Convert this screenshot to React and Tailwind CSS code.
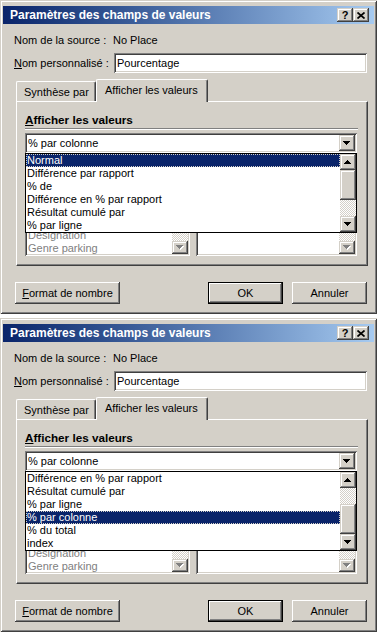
import React from "react";

const FONT = "font-['Liberation_Sans',Arial,sans-serif]";
const FRAME = "shadow-[inset_1px_1px_0_#d4d0c8,inset_-1px_-1px_0_#404040,inset_2px_2px_0_#ffffff,inset_-2px_-2px_0_#808080]";
const RAISED = "shadow-[inset_-1px_-1px_0_#404040,inset_1px_1px_0_#ffffff,inset_-2px_-2px_0_#808080,inset_2px_2px_0_#d4d0c8]";
const SCROLL_BTN = "shadow-[inset_-1px_-1px_0_#404040,inset_1px_1px_0_#d4d0c8,inset_-2px_-2px_0_#808080,inset_2px_2px_0_#ffffff]";
const SUNKEN = "shadow-[inset_1px_1px_0_#808080,inset_-1px_-1px_0_#ffffff,inset_2px_2px_0_#404040,inset_-2px_-2px_0_#d4d0c8]";
const DITHER = "bg-[image:repeating-conic-gradient(#ffffff_0_25%,#d4d0c8_0_50%)] bg-[length:2px_2px]";

const Arrow = ({ up, disabled }) => {
  const d = up
    ? "M3 0h1v1H3zM2 1h3v1H2zM1 2h5v1H1zM0 3h7v1H0z"
    : "M0 0h7v1H0zM1 1h5v1H1zM2 2h3v1H2zM3 3h1v1H3z";
  return (
    <svg width="8" height="5" viewBox="0 0 8 5" shapeRendering="crispEdges">
      {disabled && <path d={d} fill="#ffffff" transform="translate(1 1)" />}
      <path d={d} fill={disabled ? "#808080" : "#000000"} />
    </svg>
  );
};

const ScrollBtn = ({ up, disabled, className = "h-[16px]" }) => (
  <div className={`w-[16px] ${className} bg-[#d4d0c8] flex items-center justify-center ${SCROLL_BTN}`}>
    <Arrow up={up} disabled={disabled} />
  </div>
);

const TitleBtn = ({ children }) => (
  <div className={`w-[16px] h-[14px] bg-[#d4d0c8] flex items-center justify-center ${SCROLL_BTN}`}>
    {children}
  </div>
);

const Dialog = ({ items, selected, thumbBottom }) => {
  return (
    <div className={`w-[377px] h-[314px] shrink-0 bg-[#d4d0c8] p-[3px] flex flex-col ${FRAME}`}>
      {/* barre de titre */}
      <div className="mt-[3px] h-[18px] flex items-center bg-gradient-to-r from-[#0a246a] to-[#a6caf0] pl-[7px] pr-[5px]">
        <span className="flex-1 text-white font-bold text-[12px] leading-[18px]">
          Paramètres des champs de valeurs
        </span>
        <div className="flex">
          <TitleBtn>
            <span className="font-bold text-[11px] leading-[11px]">?</span>
          </TitleBtn>
          <TitleBtn>
            <svg width="8" height="7" viewBox="0 0 8 7">
              <path d="M0.5 0.5L7.5 6.5M7.5 0.5L0.5 6.5" stroke="#000" strokeWidth="1.7" />
            </svg>
          </TitleBtn>
        </div>
      </div>

      <div className="flex flex-col pl-[11px]">
        <div className="mt-[10px] h-[13px] flex">
          <span className="w-[99px]">Nom de la source :</span>
          <span>No Place</span>
        </div>

        <div className="mt-[6px] h-[20px] flex items-center">
          <span className="w-[100px]">
            <span className="underline">N</span>om personnalisé :
          </span>
          <div className={`w-[253px] h-[20px] bg-white pl-[3px] leading-[20px] ${SUNKEN}`}>Pourcentage</div>
        </div>

        {/* onglets */}
        <div className="mt-[6px] ml-[2px] flex items-end relative z-10">
          <div className="w-[80px] h-[20px] border border-b-0 border-white border-r-[#404040] shadow-[inset_-1px_0_0_#808080] rounded-t-[2px] pl-[7px] pt-[4px]">
            Synthèse par
          </div>
          <div className="w-[112px] h-[23px] -mb-px bg-[#d4d0c8] border border-b-0 border-white border-r-[#404040] shadow-[inset_-1px_0_0_#808080] rounded-t-[2px] pl-[8px] pt-[4px]">
            Afficher les valeurs
          </div>
        </div>

        <div className="ml-[2px] w-[352px] h-[165px] border border-white border-r-[#404040] border-b-[#404040] shadow-[inset_-1px_-1px_0_#808080] pl-[8px] pt-[11px] flex flex-col">
          <div className="h-[13px] font-bold text-[11.7px]">
            <span className="underline">A</span>fficher les valeurs
          </div>
          <div className="mt-[2px] w-[333px] h-[2px] border-t border-t-[#808080] border-b border-b-white" />

          <div className="mt-[3px] relative w-[332px] h-[20px]">
            <div className={`w-full h-full bg-white p-[2px] flex items-center ${SUNKEN}`}>
              <span className="flex-1 pl-[1px]">% par colonne</span>
              <ScrollBtn />
            </div>

            {/* liste déroulante ouverte */}
            <div className="absolute left-0 top-[20px] w-[332px] h-[80px] z-20 border border-black bg-white flex">
              <div className="flex-1 flex flex-col">
                {items.map((it, i) => (
                  <div
                    key={it}
                    className={
                      i === selected
                        ? "h-[13px] pl-[1px] bg-[#0a246a] text-white outline-1 outline-dotted outline-[#d4d0c8] -outline-offset-1"
                        : "h-[13px] pl-[1px]"
                    }
                  >
                    {it}
                  </div>
                ))}
              </div>
              <div className="w-[16px] flex flex-col">
                <ScrollBtn up />
                <div className={`flex-1 flex flex-col ${thumbBottom ? "justify-end" : "justify-start"} ${DITHER}`}>
                  <div className={`h-[30px] bg-[#d4d0c8] ${SCROLL_BTN}`} />
                </div>
                <ScrollBtn />
              </div>
            </div>
          </div>

          <div className="mt-[74px] flex gap-[6px]">
            <div className={`w-[165px] h-[29px] bg-white p-[2px] flex ${SUNKEN}`}>
              <div className="flex-1 pl-[1px] text-[#808080] overflow-hidden">
                <div className="h-[13px]">Désignation</div>
                <div className="h-[12px]">Genre parking</div>
              </div>
              <div className="w-[16px] flex flex-col">
                <div className={`flex-1 ${DITHER}`} />
                <ScrollBtn disabled className="h-[13px]" />
              </div>
            </div>
            <div className={`w-[161px] h-[29px] bg-white p-[2px] flex ${SUNKEN}`}>
              <div className="flex-1" />
              <div className="w-[16px] flex flex-col">
                <div className={`flex-1 ${DITHER}`} />
                <ScrollBtn disabled className="h-[13px]" />
              </div>
            </div>
          </div>
        </div>

        {/* boutons */}
        <div className="mt-[16px] flex items-center">
          <div className={`ml-[1px] w-[105px] h-[22px] flex items-center justify-center ${RAISED}`}>
            <span className="underline">F</span>ormat de nombre
          </div>
          <div className={`ml-[88px] w-[75px] h-[22px] border border-black flex items-center justify-center ${RAISED}`}>
            OK
          </div>
          <div className={`ml-[9px] w-[75px] h-[22px] flex items-center justify-center ${RAISED}`}>
            Annuler
          </div>
        </div>
      </div>
    </div>
  );
};

export default function App() {
  return (
    <div className={`w-[382px] h-[639px] bg-white flex flex-col gap-[4px] ${FONT} text-[11px] leading-[13px] text-black`}>
      <Dialog
        items={[
          "Normal",
          "Différence par rapport",
          "% de",
          "Différence en % par rapport",
          "Résultat cumulé par",
          "% par ligne",
        ]}
        selected={0}
        thumbBottom={false}
      />
      <Dialog
        items={[
          "Différence en % par rapport",
          "Résultat cumulé par",
          "% par ligne",
          "% par colonne",
          "% du total",
          "index",
        ]}
        selected={3}
        thumbBottom
      />
    </div>
  );
}
